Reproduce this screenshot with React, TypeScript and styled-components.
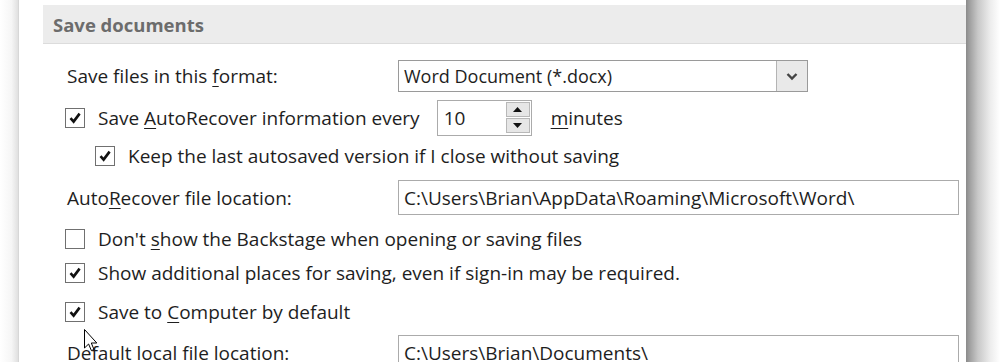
import styled, { createGlobalStyle } from 'styled-components';

const GlobalStyle = createGlobalStyle`
  html, body {
    margin: 0;
    padding: 0;
    background: #ffffff;
    overflow: hidden;
  }
  body {
    font-family: "Open Sans", "Noto Sans", "Liberation Sans", sans-serif;
    color: #1e1e1e;
  }
`;

const LABEL_COLUMN = 331;

const Page = styled.div`
  display: flex;
  width: 1000px;
  height: 362px;
  overflow: hidden;
  position: relative;
`;

const LeftEdge = styled.div`
  width: 19px;
  flex: none;
  background: linear-gradient(to right, #ffffff 0%, #f6f6f6 60%, #e2e2e2 92%, #d2d2d2 100%);
`;

const RightEdge = styled.div`
  width: 34px;
  flex: none;
  background: linear-gradient(to right, #8a8a8a 0px, #9c9c9c 3px, #c8c8c8 12px, #ececec 24px, #ffffff 34px);
`;

const Content = styled.div`
  flex: 1;
  padding: 5px 0 0 24px;
  display: flex;
  flex-direction: column;
  overflow: hidden;
`;

const SectionHeader = styled.div`
  flex: none;
  height: 38px;
  display: flex;
  align-items: center;
  padding-left: 10px;
  background: #ececec;
  border-bottom: 1px solid #dcdcdc;
  font-size: 18.5px;
  font-weight: 700;
  color: #6c6c6c;
`;

const Options = styled.div`
  flex: none;
  display: flex;
  flex-direction: column;
  padding-left: 22px;
  font-size: 19px;
`;

const Row = styled.div<{ $top: number; $height: number; $indent?: number }>`
  flex: none;
  display: flex;
  align-items: center;
  height: ${(p) => p.$height}px;
  margin-top: ${(p) => p.$top}px;
  padding-left: ${(p) => p.$indent ?? 0}px;
  white-space: pre;
`;

const Text = styled.span`
  white-space: pre;
`;

const Label = styled.span`
  width: ${LABEL_COLUMN}px;
  padding-left: 2px;
  flex: none;
  white-space: pre;
`;

const Key = styled.span`
  text-decoration: underline;
  text-underline-offset: 3px;
  text-decoration-thickness: 1px;
`;

const Box = styled.span`
  width: 18px;
  height: 18px;
  border: 1px solid #707070;
  background: #ffffff;
  display: inline-flex;
  align-items: center;
  justify-content: center;
  flex: none;
  margin-right: 13px;
`;

const Select = styled.div`
  width: 408px;
  height: 30px;
  border: 1px solid #9a9a9a;
  display: flex;
  align-items: stretch;
  box-sizing: content-box;
  flex: none;
`;

const SelectValue = styled.div`
  flex: 1;
  display: flex;
  align-items: center;
  padding-left: 5px;
  font-size: 18px;
`;

const SelectButton = styled.div`
  width: 30px;
  border-left: 1px solid #b4b4b4;
  background: #e9e9e9;
  display: flex;
  align-items: center;
  justify-content: center;
`;

const TextField = styled.div<{ $width: number }>`
  width: ${(p) => p.$width}px;
  height: 35px;
  border: 1px solid #ababab;
  display: flex;
  align-items: center;
  padding-left: 5px;
  box-sizing: border-box;
  flex: none;
`;

const Spinner = styled.div`
  width: 95px;
  height: 36px;
  margin-left: 17px;
  border: 1px solid #ababab;
  box-sizing: border-box;
  display: flex;
  align-items: center;
  padding: 0 1px 0 6px;
  flex: none;
`;

const SpinValue = styled.span`
  flex: 1;
`;

const SpinButtons = styled.div`
  display: flex;
  flex-direction: column;
  gap: 1px;
`;

const SpinButton = styled.div`
  width: 22px;
  height: 13px;
  border: 1px solid #b8b8b8;
  background: #e6e6e6;
  display: flex;
  align-items: center;
  justify-content: center;
`;

const Suffix = styled.span`
  margin-left: 19px;
`;

const Pointer = styled.svg`
  position: absolute;
  left: 84px;
  top: 329px;
`;

const Check = () => (
  <svg width="14" height="14" viewBox="0 0 14 14">
    <path d="M2.5 7.2 L5.6 10.6 L11.6 2.6" fill="none" stroke="#111" strokeWidth="2.6" />
  </svg>
);

const CheckBox = ({ checked }: { checked: boolean }) => <Box>{checked && <Check />}</Box>;

const App = () => (
  <>
    <GlobalStyle />
    <Page>
      <LeftEdge />
      <Content>
        <SectionHeader>Save documents</SectionHeader>
        <Options>
          <Row $top={16} $height={32}>
            <Label>
              Save files in this <Key>f</Key>ormat:
            </Label>
            <Select>
              <SelectValue>Word Document (*.docx)</SelectValue>
              <SelectButton>
                <svg width="12" height="9" viewBox="0 0 12 9">
                  <path d="M1.5 2 L6 6.5 L10.5 2" fill="none" stroke="#444" strokeWidth="2.4" />
                </svg>
              </SelectButton>
            </Select>
          </Row>
          <Row $top={8} $height={35}>
            <CheckBox checked />
            <Text>
              Save <Key>A</Key>utoRecover information every
            </Text>
            <Spinner>
              <SpinValue>10</SpinValue>
              <SpinButtons>
                <SpinButton>
                  <svg width="9" height="5" viewBox="0 0 9 5">
                    <path d="M0 5 L4.5 0 L9 5 Z" fill="#111" />
                  </svg>
                </SpinButton>
                <SpinButton>
                  <svg width="9" height="5" viewBox="0 0 9 5">
                    <path d="M0 0 L9 0 L4.5 5 Z" fill="#111" />
                  </svg>
                </SpinButton>
              </SpinButtons>
            </Spinner>
            <Suffix>
              <Key>m</Key>inutes
            </Suffix>
          </Row>
          <Row $top={6} $height={30} $indent={30}>
            <CheckBox checked />
            <Text>Keep the last autosaved version if I close without saving</Text>
          </Row>
          <Row $top={9} $height={35}>
            <Label>
              Auto<Key>R</Key>ecover file location:
            </Label>
            <TextField $width={561}>C:\Users\Brian\AppData\Roaming\Microsoft\Word\</TextField>
          </Row>
          <Row $top={9} $height={30}>
            <CheckBox checked={false} />
            <Text>
              Don't <Key>s</Key>how the Backstage when opening or saving files
            </Text>
          </Row>
          <Row $top={4} $height={30}>
            <CheckBox checked />
            <Text>Show additional places for saving, even if sign-in may be required.</Text>
          </Row>
          <Row $top={9} $height={30}>
            <CheckBox checked />
            <Text>
              Save to <Key>C</Key>omputer by default
            </Text>
          </Row>
          <Row $top={8} $height={35}>
            <Label>Default local file location:</Label>
            <TextField $width={561}>C:\Users\Brian\Documents\</TextField>
          </Row>
        </Options>
      </Content>
      <RightEdge />
      <Pointer width="14" height="24" viewBox="0 0 14 24">
        <path
          d="M0.5 0.5 L0.5 19 L4.6 15 L7.4 21.6 L10 20.5 L7.3 14 L12.8 14 Z"
          fill="#ffffff"
          stroke="#000000"
          strokeWidth="1"
        />
      </Pointer>
    </Page>
  </>
);

export default App;
